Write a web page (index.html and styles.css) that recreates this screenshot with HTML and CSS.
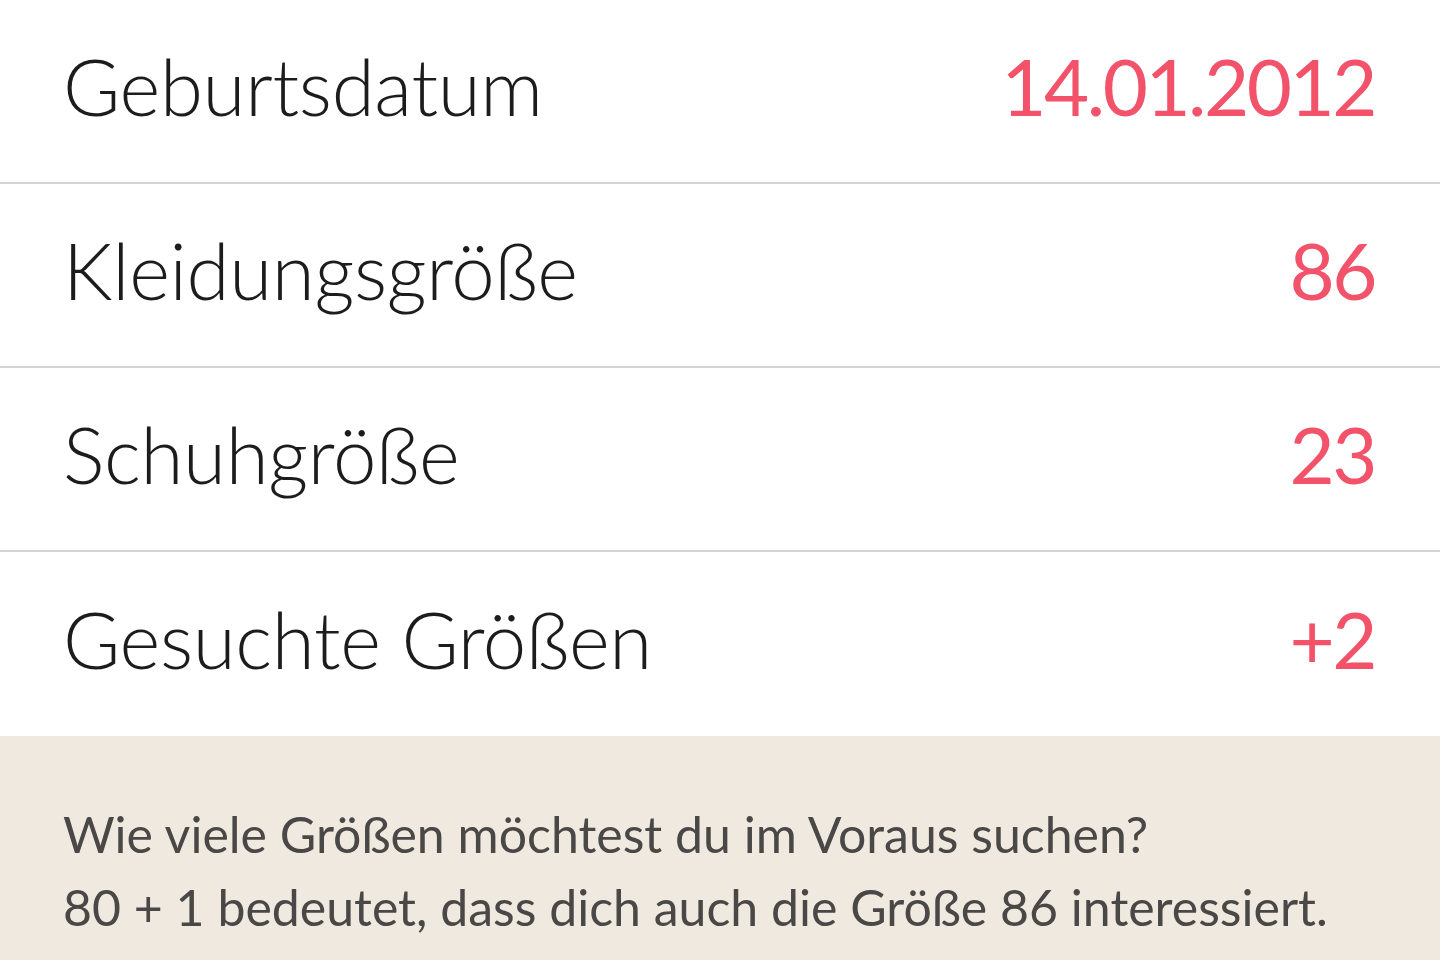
FILE: index.html
```html
<!DOCTYPE html>
<html lang="de">
<head>
<meta charset="utf-8">
<title>Profil</title>
<link rel="stylesheet" href="styles.css">
</head>
<body>
<main class="screen">
  <section class="list">
    <div class="row"><span class="label">Geburtsdatum</span><span class="value">14.01.2012</span></div>
    <div class="row"><span class="label">Kleidungsgröße</span><span class="value">86</span></div>
    <div class="row"><span class="label">Schuhgröße</span><span class="value">23</span></div>
    <div class="row last"><span class="label">Gesuchte Größen</span><span class="value">+2</span></div>
  </section>
  <section class="note">
    <p>Wie viele Größen möchtest du im Voraus suchen?<br>80 + 1 bedeutet, dass dich auch die Größe 86 interessiert.</p>
  </section>
</main>
</body>
</html>
```
FILE: styles.css
```css
html, body {
  margin: 0;
  padding: 0;
  background: #ffffff;
}
body {
  width: 1440px;
  height: 960px;
  overflow: hidden;
  font-family: "Lato", "Liberation Sans", sans-serif;
}
.screen {
  display: flex;
  flex-direction: column;
  height: 960px;
}
.list {
  display: flex;
  flex-direction: column;
  background: #ffffff;
}
.row {
  height: 182px;
  box-sizing: border-box;
  height: 184px;
  border-bottom: 2px solid #d3d3d3;
  display: flex;
  align-items: center;
  justify-content: space-between;
  padding: 0 67px 10px 63px;
}
.row.last {
  border-bottom: none;
}
.label {
  font-weight: 300;
  font-size: 78px;
  color: #1c1c1c;
  letter-spacing: -0.3px;
}
.value {
  font-weight: 400;
  font-size: 78px;
  color: #f2536a;
  letter-spacing: -2.5px;
  margin-right: -2px;
}
.note {
  flex: 1;
  background: #f0e9e0;
  padding: 62px 63px 0;
}
.note p {
  margin: 0;
  font-size: 50px;
  line-height: 73px;
  color: #4a4846;
  font-weight: 400;
}
```
